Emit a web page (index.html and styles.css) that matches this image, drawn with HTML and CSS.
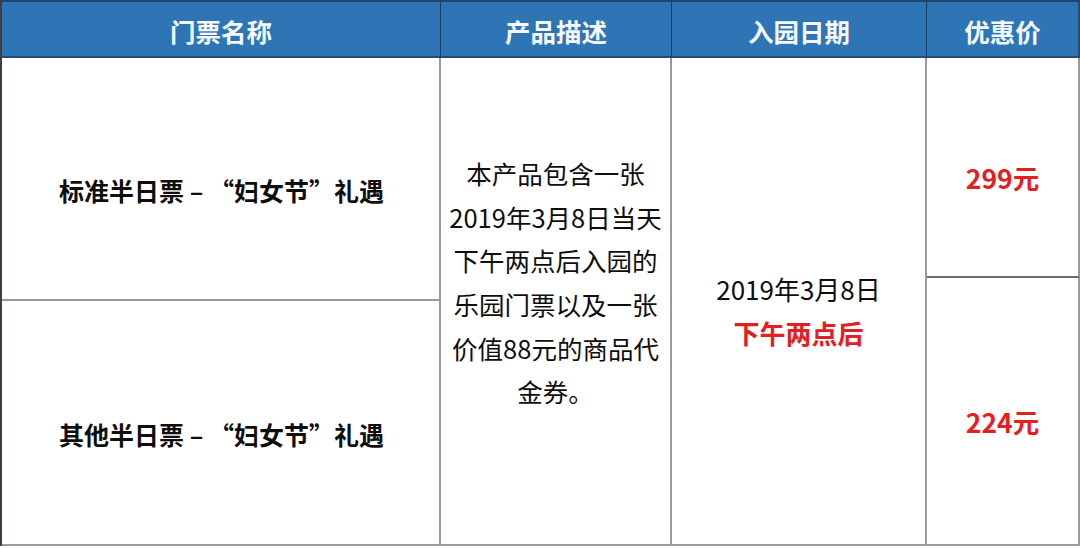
FILE: index.html
```html
<!DOCTYPE html>
<html lang="zh-CN">
<head>
<meta charset="utf-8">
<title>门票</title>
<link rel="stylesheet" href="styles.css">
</head>
<body>
<div class="table">
  <div class="th c1">门票名称</div>
  <div class="th c2">产品描述</div>
  <div class="th c3">入园日期</div>
  <div class="th c4">优惠价</div>

  <div class="td name n1">标准半日票 – “妇女节”礼遇</div>
  <div class="td desc">本产品包含一张<br>2019年3月8日当天<br>下午两点后入园的<br>乐园门票以及一张<br>价值88元的商品代<br>金券。</div>
  <div class="td date"><span>2019年3月8日</span><span class="red">下午两点后</span></div>
  <div class="td price p1"><span class="red">299元</span></div>

  <div class="td name n2">其他半日票 – “妇女节”礼遇</div>
  <div class="td price p2"><span class="red">224元</span></div>
</div>
</body>
</html>
```
FILE: styles.css
```css
html, body {
  margin: 0;
  padding: 0;
  background: #ffffff;
}
body {
  font-family: "Noto Sans CJK SC", "Noto Sans", sans-serif;
  color: #0e0e0e;
}
.table {
  display: grid;
  grid-template-columns: 439px 231px 255px 153px;
  grid-template-rows: 58px 220px 23px 245px;
  width: 1078px;
  border-left: 2px solid #3a3f4a;
  box-sizing: border-box;
}
.th {
  background: #2e75b6;
  color: #f4f8fc;
  font-weight: 700;
  font-size: 25.5px;
  display: flex;
  align-items: center;
  justify-content: center;
  border-top: 2px solid #23446b;
  border-bottom: 2px solid #2a4a70;
  border-right: 1px solid #1e3a60;
  box-sizing: border-box;
  padding-top: 2px;
}
.th.c4 { border-right: 2px solid #2a4a70; }
.td {
  display: flex;
  align-items: center;
  justify-content: center;
  border-right: 2px solid #9a9a9a;
  border-bottom: 2px solid #9a9a9a;
  box-sizing: border-box;
  font-size: 25px;
}
.name {
  grid-column: 1;
  font-weight: 700;
  padding-top: 22px;
  padding-left: 2px;
}
.n1 { grid-row: 2 / 4; }
.n2 { grid-row: 4; }
.desc {
  grid-column: 2;
  grid-row: 2 / 5;
  text-align: center;
  line-height: 43.6px;
  padding-bottom: 38px;
  font-size: 25.5px;
}
.date {
  grid-column: 3;
  grid-row: 2 / 5;
  flex-direction: column;
  line-height: 44px;
  padding-top: 20px;
  font-size: 26px;
}
.date .red { font-size: 26px; }
.price {
  grid-column: 4;
  font-weight: 700;
  padding-top: 20px;
  font-size: 26.5px;
}
.p1 { grid-row: 2; border-bottom-color: #6a6a6a; }
.p2 { grid-row: 3 / 5; }
.red {
  color: #e3201f;
  font-weight: 700;
}
```
